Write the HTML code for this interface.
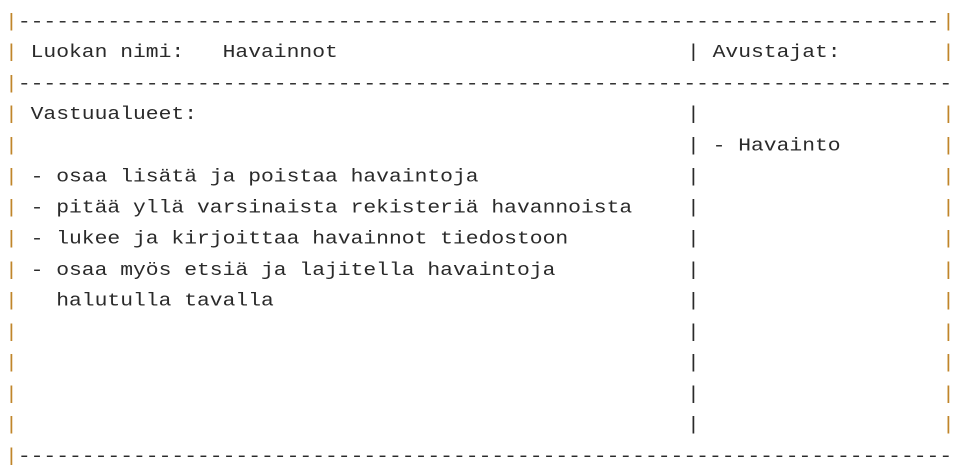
<!DOCTYPE html>
<html><head><meta charset="utf-8"><style>
html,body{margin:0;padding:0;background:#fff;width:973px;height:469px;overflow:hidden}
.w{position:absolute;left:5px;top:7px;font-family:"Liberation Mono","Courier New",monospace;font-size:21.33px;line-height:36.47px;color:#2a2a2a;transform:scaleY(0.85);transform-origin:0 0}
.r{position:relative;height:36.47px;white-space:pre}
.o{color:#c0852a}
.m{position:absolute;left:682px;top:0}
.e{position:absolute;left:937px;top:0;background:#fff}
</style></head><body>
<div class="w"><div class="r"><span class="o">|</span>-------------------------------------------------------------------------<span class="e o">|</span></div><div class="r"><span class="o">|</span> Luokan nimi:   Havainnot<span class="m">| Avustajat:</span><span class="e o">|</span></div><div class="r"><span class="o">|</span>-------------------------------------------------------------------------</div><div class="r"><span class="o">|</span> Vastuualueet:<span class="m">|</span><span class="e o">|</span></div><div class="r"><span class="o">|</span><span class="m">| - Havainto</span><span class="e o">|</span></div><div class="r"><span class="o">|</span> - osaa lisätä ja poistaa havaintoja<span class="m">|</span><span class="e o">|</span></div><div class="r"><span class="o">|</span> - pitää yllä varsinaista rekisteriä havannoista<span class="m">|</span><span class="e o">|</span></div><div class="r"><span class="o">|</span> - lukee ja kirjoittaa havainnot tiedostoon<span class="m">|</span><span class="e o">|</span></div><div class="r"><span class="o">|</span> - osaa myös etsiä ja lajitella havaintoja<span class="m">|</span><span class="e o">|</span></div><div class="r"><span class="o">|</span>   halutulla tavalla<span class="m">|</span><span class="e o">|</span></div><div class="r"><span class="o">|</span><span class="m">|</span><span class="e o">|</span></div><div class="r"><span class="o">|</span><span class="m">|</span><span class="e o">|</span></div><div class="r"><span class="o">|</span><span class="m">|</span><span class="e o">|</span></div><div class="r"><span class="o">|</span><span class="m">|</span><span class="e o">|</span></div><div class="r"><span class="o">|</span>-------------------------------------------------------------------------</div></div>
</body></html>
